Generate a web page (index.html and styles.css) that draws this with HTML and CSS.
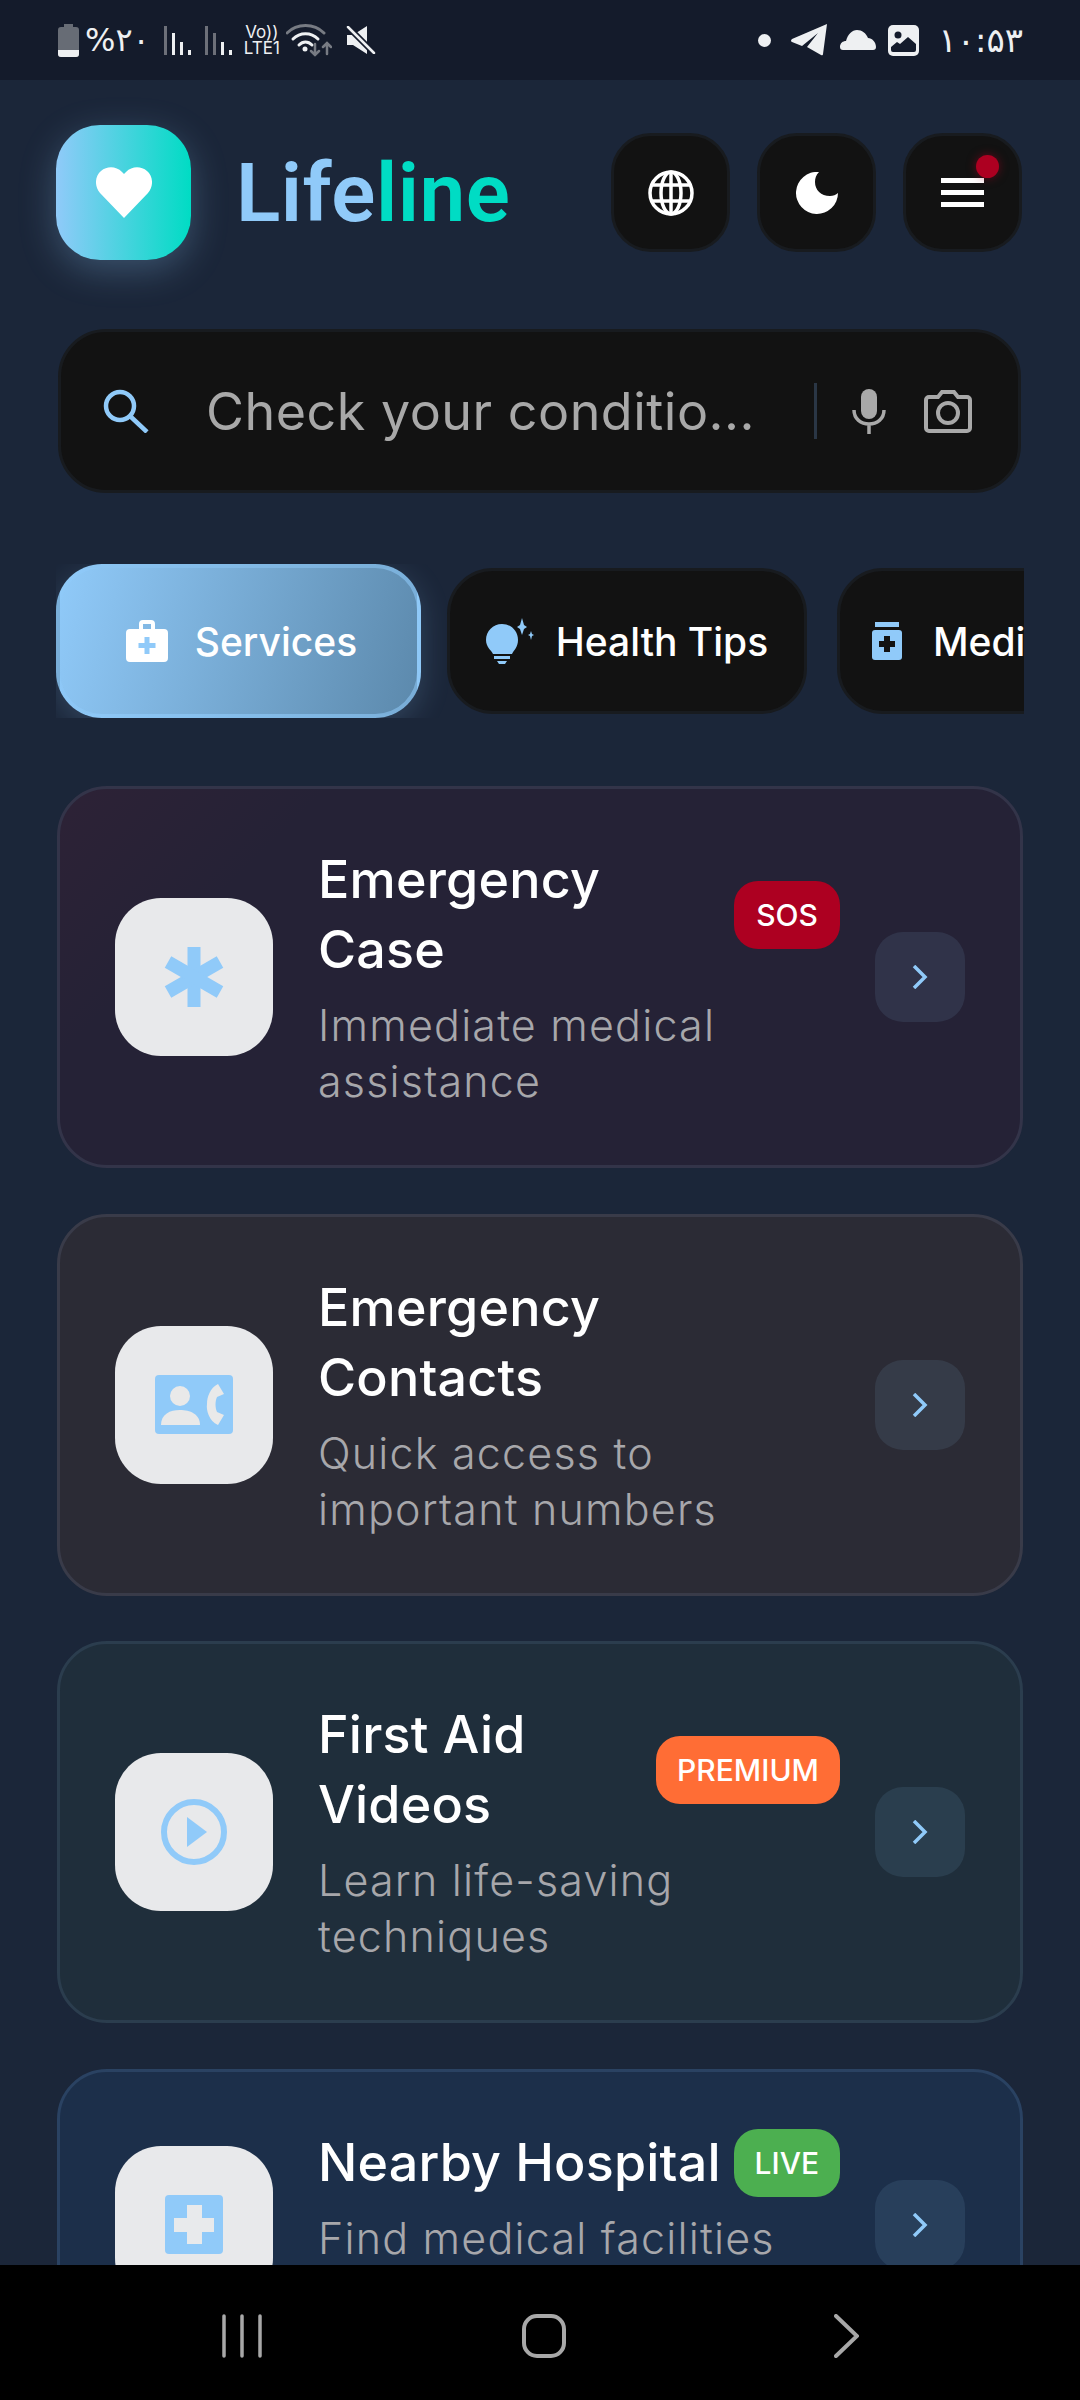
FILE: index.html
```html
<!DOCTYPE html>
<html lang="en">

<head>
  <meta charset="UTF-8" />
  <meta name="viewport" content="width=device-width, initial-scale=1.0" />
  <title>Lifeline</title>
  <link rel="stylesheet" href="styles.css">
</head>

<body>
  <div class="status-bar">
    <div class="status-left">
      <svg width="21" height="33" viewBox="0 0 21 33">
        <path d="M6 0h9v3h3a3 3 0 0 1 3 3v24a3 3 0 0 1-3 3H3a3 3 0 0 1-3-3V6a3 3 0 0 1 3-3h3z" fill="#676c75" />
        <path d="M0 26h21v4a3 3 0 0 1-3 3H3a3 3 0 0 1-3-3z" fill="#eef0f2" />
      </svg>
      <span class="status-text status-percent">%۲۰</span>
      <svg class="signal-one" width="27" height="29" viewBox="0 0 27 29">
        <rect x="0" y="0" width="3" height="29" fill="#6d7079" />
        <rect x="8" y="7" width="3" height="22" fill="#eef0f2" />
        <rect x="16" y="16" width="3" height="13" fill="#eef0f2" />
        <rect x="24" y="24" width="3" height="5" fill="#eef0f2" />
      </svg>
      <svg class="signal-two" width="27" height="29" viewBox="0 0 27 29">
        <rect x="0" y="0" width="3" height="29" fill="#6d7079" />
        <rect x="8" y="7" width="3" height="22" fill="#6d7079" />
        <rect x="16" y="16" width="3" height="13" fill="#eef0f2" />
        <rect x="24" y="24" width="3" height="5" fill="#eef0f2" />
      </svg>
      <div class="volte"><span>Vo))</span><span>LTE1</span></div>
      <svg class="wifi" width="46" height="34" viewBox="0 0 46 34" fill="none" stroke-linecap="round">
        <path d="M1 10C11 0 28 0 38 10" stroke="#777b83" stroke-width="3" />
        <path d="M7 16C14 9 25 9 32 16" stroke="#eef0f2" stroke-width="3" />
        <path d="M13 22C17 18 22 18 26 22" stroke="#eef0f2" stroke-width="3" />
        <circle cx="19" cy="26" r="2.5" fill="#eef0f2" />
        <path d="M29 21V32M25 28l4 4 4-4M41 31V20M37 24l4-4 4 4" stroke="#777b83" stroke-width="2.5" />
      </svg>
      <svg class="mute" width="30" height="28" viewBox="0 0 30 28">
        <path d="M1 9h6L21 0v28L7 19H1z" fill="#eef0f2" />
        <path d="M2 1l26 26" stroke="#141b2b" stroke-width="6" />
        <path d="M2 1l26 26" stroke="#eef0f2" stroke-width="2.5" stroke-linecap="round" />
      </svg>
    </div>
    <div class="status-right">
      <span class="status-dot"></span>
      <svg class="telegram" width="37" height="32" viewBox="0 0 37 32">
        <path d="M36 0L1 15q-2 2 0 3l10 4L27 9 16 23l14 8q2 1 2-1z" fill="#eef0f2" />
      </svg>
      <svg width="36" height="20" viewBox="0 0 36 20">
        <path d="M3 20a3 3 0 0 1-3-3c0-4 3-6 6-6C8 4 12 0 17 0c5 0 9 3 11 8 4 0 8 4 8 9a3 3 0 0 1-3 3z" fill="#eef0f2" />
      </svg>
      <svg width="31" height="31" viewBox="0 0 31 31">
        <rect width="31" height="31" rx="5" fill="#eef0f2" />
        <circle cx="10" cy="10" r="3.5" fill="#141b2b" />
        <path d="M3 25v-3l6-5 3 2 8-7 8 7v6a2 2 0 0 1-2 2H5a2 2 0 0 1-2-2z" fill="#141b2b" />
      </svg>
      <span class="status-text status-time">۱۰:۵۳</span>
    </div>
  </div>

  <div class="screen">
    <header class="top-row">
      <div class="brand">
        <div class="logo">
          <svg width="56" height="51" viewBox="0 0 56 51">
            <path d="M28 51L4 26C-2 19-1 9 5 4c6-5 15-5 21 1l2 2 2-2c6-6 15-6 21-1 6 5 7 15 1 22z" fill="#fff" />
          </svg>
        </div>
        <div class="brand-name"><span class="brand-life">Life</span><span class="brand-line">line</span></div>
      </div>
      <div class="top-actions">
        <button class="icon-btn" type="button" aria-label="Language">
          <svg width="46" height="46" viewBox="0 0 46 46" fill="none" stroke="#fff" stroke-width="3.5">
            <circle cx="23" cy="23" r="21" />
            <ellipse cx="23" cy="23" rx="10" ry="21" />
            <path d="M3 15h40M3 31h40M23 2v42" />
          </svg>
        </button>
        <button class="icon-btn" type="button" aria-label="Theme">
          <svg width="42" height="42" viewBox="0 0 42 42">
            <path d="M23 0a21 21 0 1 0 19 21c-2 2-5 3-8 3-9 0-15-6-15-14 0-4 1-7 4-10z" fill="#fff" />
          </svg>
        </button>
        <button class="icon-btn menu-btn" type="button" aria-label="Menu">
          <span class="menu-bars"><i></i><i></i><i></i></span>
          <span class="menu-dot"></span>
        </button>
      </div>
    </header>

    <div class="search-box">
      <svg width="46" height="44" viewBox="0 0 46 44" fill="none" stroke="#90caf9" stroke-width="4.5">
        <circle cx="17" cy="17" r="14" />
        <path d="M27 27l17 16" />
      </svg>
      <span class="search-text">Check your conditio...</span>
      <span class="search-divider"></span>
      <svg class="mic" width="34" height="45" viewBox="0 0 34 45">
        <rect x="9" y="0" width="16" height="30" rx="8" fill="#a9a9a9" />
        <path d="M2 21c0 9 7 14 15 14s15-5 15-14M17 35v10" fill="none" stroke="#a9a9a9" stroke-width="3.5" />
      </svg>
      <svg class="camera" width="48" height="43" viewBox="0 0 48 43" fill="none" stroke="#a9a9a9" stroke-width="4">
        <path d="M5 7h9l4-5h12l4 5h9a3 3 0 0 1 3 3v28a3 3 0 0 1-3 3H5a3 3 0 0 1-3-3V10a3 3 0 0 1 3-3z" />
        <circle cx="24" cy="23" r="10" />
      </svg>
    </div>

    <nav class="tabs">
      <div class="tab tab-active">
        <svg width="42" height="42" viewBox="0 0 42 42">
          <path d="M13 9V4a4 4 0 0 1 4-4h8a4 4 0 0 1 4 4v5h9a4 4 0 0 1 4 4v25a4 4 0 0 1-4 4H4a4 4 0 0 1-4-4V13a4 4 0 0 1 4-4zm4 0h8V4h-8z" fill="#fff" fill-rule="evenodd" />
          <path d="M18.500 17h5v6h6v5h-6v6h-5v-6h-6v-5h6z" fill="#90caf9" />
        </svg>
        <span>Services</span>
      </div>
      <div class="tab tab-tips">
        <svg width="48" height="46" viewBox="0 0 48 46">
          <path d="M16 6c9 0 16 7 16 16 0 7-4 10-6 14H7C5 32 0 29 0 22 0 13 7 6 16 6z" fill="#90caf9" />
          <path d="M8 38h16v3H8zM11 43h10l-2 3h-6z" fill="#90caf9" />
          <path d="M36 0l2 7 3 2-3 2-2 6-2-6-3-2 3-2zM45 13l1 3 2 1-2 1-1 4-1-4-2-1 2-1z" fill="#90caf9" />
        </svg>
        <span>Health Tips</span>
      </div>
      <div class="tab tab-meds">
        <svg width="30" height="38" viewBox="0 0 30 38">
          <rect x="3" y="0" width="24" height="5" fill="#90caf9" />
          <rect x="0" y="8" width="30" height="30" rx="3" fill="#90caf9" />
          <path d="M12 14h6v5h5v6h-5v5h-6v-5H7v-6h5z" fill="#121212" />
        </svg>
        <span>Medicine</span>
      </div>
    </nav>

    <section class="card-list">
      <article class="card card-red">
        <div class="card-icon">
          <svg width="60" height="60" viewBox="0 0 60 60" fill="#90caf9">
            <rect x="23.500" y="0" width="13" height="60" />
            <rect x="23.500" y="0" width="13" height="60" transform="rotate(60 30 30)" />
            <rect x="23.500" y="0" width="13" height="60" transform="rotate(-60 30 30)" />
          </svg>
        </div>
        <div class="card-body">
          <div class="card-head">
            <h2 class="card-title">Emergency<br>Case</h2>
            <span class="badge badge-sos">SOS</span>
          </div>
          <p class="card-sub">Immediate medical<br>assistance</p>
        </div>
        <div class="card-arrow">
          <svg width="16" height="24" viewBox="0 0 16 24" fill="none" stroke="#90caf9" stroke-width="3.500">
            <path d="M2 1l11 11L2 23" />
          </svg>
        </div>
      </article>

      <article class="card card-grey">
        <div class="card-icon">
          <svg width="78" height="59" viewBox="0 0 78 59">
            <rect width="78" height="59" rx="4" fill="#90caf9" />
            <circle cx="25" cy="21" r="10" fill="#e9e9e9" />
            <path d="M6 50c0-11 9-15 19-15s20 4 20 15z" fill="#e9e9e9" />
            <path d="M63 9l6 10-7 3c-2 4-2 11 0 15l7 3-6 10c-9-4-12-15-11-21 0-7 3-16 11-20z" fill="#e9e9e9" />
          </svg>
        </div>
        <div class="card-body">
          <div class="card-head">
            <h2 class="card-title">Emergency<br>Contacts</h2>
          </div>
          <p class="card-sub">Quick access to<br>important numbers</p>
        </div>
        <div class="card-arrow">
          <svg width="16" height="24" viewBox="0 0 16 24" fill="none" stroke="#90caf9" stroke-width="3.500">
            <path d="M2 1l11 11L2 23" />
          </svg>
        </div>
      </article>

      <article class="card card-teal">
        <div class="card-icon">
          <svg width="66" height="66" viewBox="0 0 66 66">
            <circle cx="33" cy="33" r="30" fill="none" stroke="#90caf9" stroke-width="6" />
            <path d="M26 18l20 15-20 15z" fill="#90caf9" />
          </svg>
        </div>
        <div class="card-body">
          <div class="card-head">
            <h2 class="card-title">First Aid<br>Videos</h2>
            <span class="badge badge-premium">PREMIUM</span>
          </div>
          <p class="card-sub">Learn life-saving<br>techniques</p>
        </div>
        <div class="card-arrow">
          <svg width="16" height="24" viewBox="0 0 16 24" fill="none" stroke="#90caf9" stroke-width="3.500">
            <path d="M2 1l11 11L2 23" />
          </svg>
        </div>
      </article>

      <article class="card card-blue">
        <div class="card-icon">
          <svg width="58" height="59" viewBox="0 0 58 59">
            <rect width="58" height="59" rx="4" fill="#90caf9" />
            <path d="M22 10h15v13h12v14H37v12H22V37H9V23h13z" fill="#e8eaec" />
          </svg>
        </div>
        <div class="card-body">
          <div class="card-head">
            <h2 class="card-title">Nearby Hospital</h2>
            <span class="badge badge-live">LIVE</span>
          </div>
          <p class="card-sub">Find medical facilities</p>
        </div>
        <div class="card-arrow">
          <svg width="16" height="24" viewBox="0 0 16 24" fill="none" stroke="#90caf9" stroke-width="3.500">
            <path d="M2 1l11 11L2 23" />
          </svg>
        </div>
      </article>
    </section>
  </div>

  <div class="nav-bar">
    <svg width="40" height="44" viewBox="0 0 40 44" stroke="#a8a8a8" stroke-width="3.500" stroke-linecap="round">
      <path d="M2 2v40M20 2v40M38 2v40" />
    </svg>
    <svg class="nav-home" width="44" height="44" viewBox="0 0 44 44" fill="none" stroke="#a8a8a8" stroke-width="4">
      <rect x="2" y="2" width="40" height="40" rx="13" />
    </svg>
    <svg width="25" height="44" viewBox="0 0 25 44" fill="none" stroke="#a8a8a8" stroke-width="4" stroke-linecap="round">
      <path d="M2 2l21 20L2 42" />
    </svg>
  </div>
</body>

</html>
```

FILE: styles.css
```css
* {
  box-sizing: border-box;
}

html,
body {
  margin: 0;
  height: 2400px;
  overflow: hidden;
}

body {
  font-family: Inter, "Noto Sans", sans-serif;
  background-color: #1b2639;
  color: #fff;
  display: flex;
  flex-direction: column;
}

/* phone status bar */
.status-bar {
  height: 80px;
  flex: none;
  padding: 0 57px 0 58px;
  background-color: #141b2b;
  display: flex;
  align-items: center;
  justify-content: space-between;
}

.status-left,
.status-right {
  display: flex;
  align-items: center;
}

.status-text {
  font-family: "DejaVu Sans", sans-serif;
  font-size: 32px;
  color: #eef0f2;
}

.status-percent {
  margin-left: 6px;
}

.signal-one {
  margin-left: 14px;
}

.signal-two {
  margin-left: 14px;
}

.volte {
  margin-left: 12px;
  display: flex;
  flex-direction: column;
  align-items: center;
  font-size: 17px;
  line-height: 16px;
  color: #eef0f2;
}

.wifi {
  margin-left: 6px;
}

.mute {
  margin-left: 14px;
}

.status-right svg {
  margin-left: 12px;
}

.status-dot {
  width: 13px;
  height: 13px;
  margin-right: 8px;
  border-radius: 50%;
  background-color: #eef0f2;
}

.status-time {
  margin-left: 19px;
  font-size: 34px;
  letter-spacing: 3.5px;
}

/* everything under the status bar, cut off by the nav bar */
.screen {
  flex: 1;
  min-height: 0;
  overflow: hidden;
  padding: 45px 56px 0;
}

.top-row {
  height: 135px;
  padding-right: 2px;
  display: flex;
  align-items: center;
  justify-content: space-between;
}

.brand {
  display: flex;
  align-items: center;
  gap: 45px;
}

.logo {
  flex: none;
  width: 135px;
  height: 135px;
  border-radius: 44px;
  background: linear-gradient(90deg, #90caf9, #00dcc4);
  box-shadow: 0 10px 36px rgba(144, 202, 249, 0.28);
  display: flex;
  align-items: center;
  justify-content: center;
}

.brand-name {
  font-family: Roboto, sans-serif;
  font-size: 82px;
  font-weight: 600;
  letter-spacing: 0.5px;
  line-height: 1;
}

.brand-life {
  color: #90caf9;
}

.brand-line {
  color: #00dcc4;
}

.top-actions {
  flex: none;
  display: flex;
  gap: 27px;
}

.icon-btn {
  position: relative;
  width: 119px;
  height: 119px;
  padding: 0;
  border: 3px solid #181b1f;
  border-radius: 40px;
  background-color: #121212;
  display: flex;
  align-items: center;
  justify-content: center;
}

.menu-bars {
  width: 43px;
  display: flex;
  flex-direction: column;
  gap: 7px;
}

.menu-bars i {
  height: 5px;
  background-color: #fff;
}

.menu-dot {
  position: absolute;
  top: 19px;
  right: 20px;
  width: 23px;
  height: 23px;
  border-radius: 50%;
  background-color: #ad0021;
  box-shadow: 0 0 10px rgba(173, 0, 33, 0.5);
}

.search-box {
  height: 164px;
  margin: 69px 3px 0 2px;
  padding: 0 46px 0 42px;
  border: 3px solid #181b1f;
  border-radius: 48px;
  background-color: #121212;
  display: flex;
  align-items: center;
}

.search-text {
  flex: 1;
  margin-left: 57px;
  font-size: 52px;
  letter-spacing: 0.5px;
  color: #a8a8a8;
  white-space: nowrap;
}

.search-divider {
  width: 3px;
  height: 56px;
  background-color: #2a3645;
}

.mic {
  margin-left: 35px;
}

.camera {
  margin-left: 38px;
}

.tabs {
  height: 154px;
  margin: 71px 0 0;
  overflow: hidden;
  display: flex;
  align-items: center;
  gap: 26px;
}

.tab {
  flex: none;
  height: 146px;
  border: 3px solid #181b1f;
  border-radius: 46px;
  background-color: #121212;
  font-size: 39px;
  font-weight: 500;
  display: flex;
  align-items: center;
  justify-content: center;
  gap: 22px;
}

.tab-active {
  width: 365px;
  height: 154px;
  padding-left: 6px;
  gap: 27px;
  border: 4px solid rgba(144, 202, 249, 0.55);
  background: linear-gradient(105deg, #90caf9, #5c89ac);
  box-shadow: 0 8px 30px rgba(144, 202, 249, 0.2);
}

.tab-tips {
  width: 360px;
}

.tab-meds {
  margin-left: 4px;
  justify-content: flex-start;
  padding: 0 32px;
  gap: 31px;
}

.card-list {
  margin: 68px 0 0;
  padding: 0 1px;
  display: flex;
  flex-direction: column;
  gap: 45.5px;
}

.card {
  padding: 56px 55px;
  border: 3px solid #333449;
  border-radius: 50px;
  display: flex;
  align-items: center;
}

.card-red {
  background: linear-gradient(135deg, #2d2236, #252236 20%);
}

.card-grey {
  border-color: #393b49;
  background-color: #2b2b35;
}

.card-teal {
  border-color: #2b3d4e;
  background-color: #1f2e3b;
}

.card-blue {
  border-color: #2a4262;
  background-color: #1c2f4a;
}

.card-blue .card-body {
  min-height: 194px;
}

.card-icon {
  flex: none;
  width: 158px;
  height: 158px;
  border-radius: 46px;
  background-color: #e8e9eb;
  display: flex;
  align-items: center;
  justify-content: center;
}

.card-body {
  flex: 1;
  min-width: 0;
  margin: 0 35px 0 45px;
}

.card-head {
  display: flex;
  align-items: center;
  justify-content: space-between;
}

.card-title {
  margin: 0;
  font-size: 52px;
  font-weight: 500;
  letter-spacing: 0.2px;
  line-height: 70px;
  white-space: nowrap;
}

.card-sub {
  margin: 12px 0 0;
  font-size: 43px;
  font-weight: 300;
  letter-spacing: 1.2px;
  line-height: 56px;
  color: #a7a7ab;
}

.badge {
  flex: none;
  height: 68px;
  padding: 0 21px;
  border-radius: 24px;
  font-size: 30px;
  font-weight: 500;
  line-height: 68px;
  color: #fff;
}

.badge-sos {
  padding: 0 22px;
  background-color: #ad0021;
}

.badge-premium {
  background-color: #ff6d35;
}

.badge-live {
  background-color: #4caf50;
}

.card-arrow {
  flex: none;
  width: 90px;
  height: 90px;
  border-radius: 28px;
  background-color: rgba(144, 202, 249, 0.1);
  display: flex;
  align-items: center;
  justify-content: center;
}

.nav-bar {
  height: 135px;
  flex: none;
  padding: 7px 221px 0 222px;
  background-color: #000;
  display: flex;
  align-items: center;
  justify-content: space-between;
}

.nav-home {
  margin-right: 8px;
}
```
